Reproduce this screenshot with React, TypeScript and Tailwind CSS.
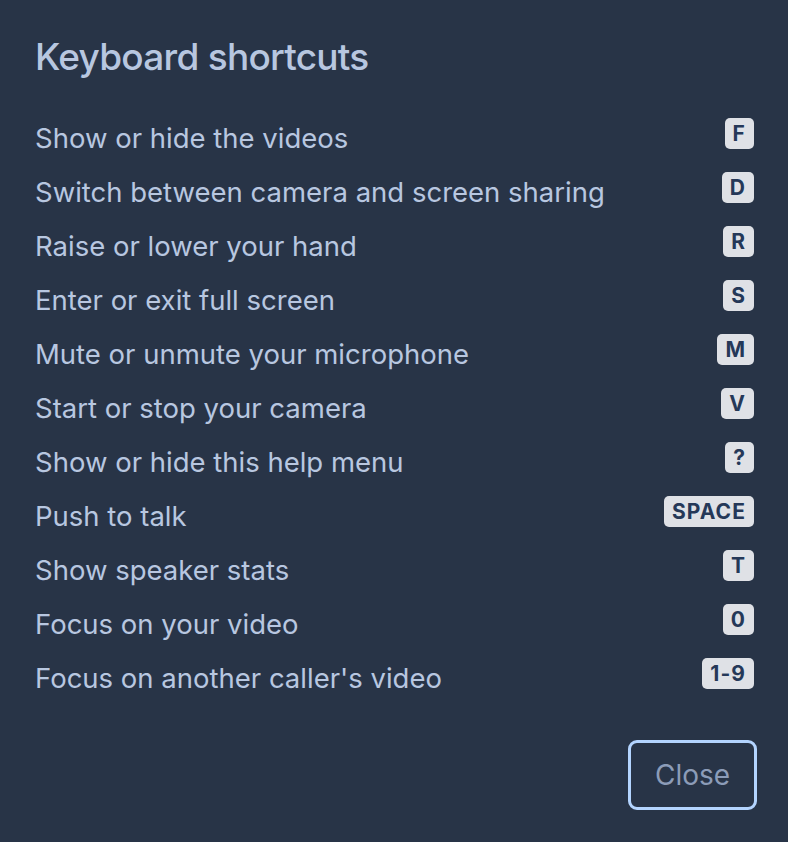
import React from 'react';

const shortcuts: { label: string; key: string }[] = [
  { label: 'Show or hide the videos', key: 'F' },
  { label: 'Switch between camera and screen sharing', key: 'D' },
  { label: 'Raise or lower your hand', key: 'R' },
  { label: 'Enter or exit full screen', key: 'S' },
  { label: 'Mute or unmute your microphone', key: 'M' },
  { label: 'Start or stop your camera', key: 'V' },
  { label: 'Show or hide this help menu', key: '?' },
  { label: 'Push to talk', key: 'SPACE' },
  { label: 'Show speaker stats', key: 'T' },
  { label: 'Focus on your video', key: '0' },
  { label: "Focus on another caller's video", key: '1-9' },
];

const App: React.FC = () => {
  return (
    <div
      className="w-[788px] h-[842px] bg-[#283447] text-[#b8c7e0] flex flex-col pl-[35px] pr-[34px]"
      style={{ fontFamily: 'Inter, "Noto Sans", sans-serif' }}
    >
      <h1 className="mt-[34px] h-[46px] text-[37px] leading-[46px] font-medium tracking-[-0.02em]">
        Keyboard shortcuts
      </h1>

      <ul className="mt-[36px] flex flex-col">
        {shortcuts.map((s) => (
          <li key={s.key} className="h-[54px] flex items-start justify-between">
            <span className="text-[27.5px] leading-[44px]">{s.label}</span>
            <kbd className="[font-family:inherit] mt-[2px] h-[31px] min-w-[28px] px-[8px] rounded-[5px] bg-[#dfe1e6] text-[#253858] text-[21px] font-bold leading-[31px] text-center tracking-[0.05em]">
              {s.key}
            </kbd>
          </li>
        ))}
      </ul>

      <div className="mt-[30px] flex justify-end mr-[-3px]">
        <button className="w-[129px] h-[70px] rounded-[9px] border-[3px] border-[#b3d4ff] text-[#8c9cb8] text-[28px] leading-none">
          Close
        </button>
      </div>
    </div>
  );
};

export default App;
